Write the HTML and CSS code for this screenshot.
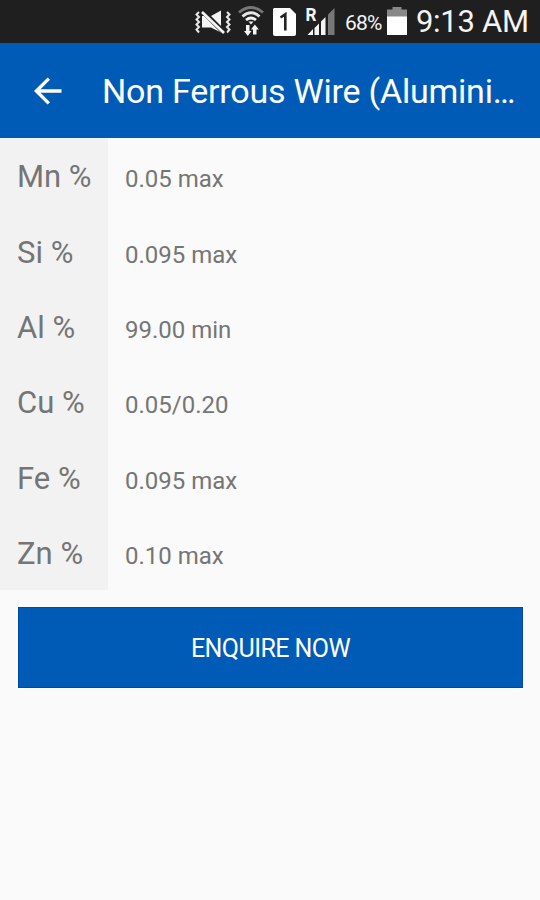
FILE: index.html
```
<!DOCTYPE html>
<html lang="en">
<head>
    <meta charset="UTF-8">
    <title>Non Ferrous Wire (Aluminium)</title>
    <link rel="stylesheet" href="styles.css">
</head>
<body>
    <!-- Status bar -->
    <div class="status-bar">
        <svg class="icon-mute" width="36" height="26" viewBox="0 0 36 26">
            <path d="M4 3 L1.5 5.5 L4 8 L1.5 10.5 L4 13 L1.5 15.5 L4 18 L1.5 20.5 L4 23.5" fill="none" stroke="#e8e8e8" stroke-width="2"/>
            <path d="M32 3 L34.5 5.5 L32 8 L34.5 10.5 L32 13 L34.5 15.5 L32 18 L34.5 20.5 L32 23.5" fill="none" stroke="#e8e8e8" stroke-width="2"/>
            <path d="M7 7 H16 L26 1.5 V23.5 L16 18.5 H7 Z" fill="#f4f4f4"/>
            <path d="M8 2.5 L30 24.5" stroke="#1f1f1f" stroke-width="5"/>
            <path d="M7 3 L29 24" stroke="#f4f4f4" stroke-width="2.8"/>
        </svg>
        <svg class="icon-wifi" width="26" height="31" viewBox="0 0 26 31">
            <path d="M1 6.5 Q13 -3.5 25 6.5" fill="none" stroke="#777" stroke-width="2.8"/>
            <path d="M4.5 10.5 Q13 3 21.5 10.5" fill="none" stroke="#e4e4e4" stroke-width="3"/>
            <path d="M8 14 Q13 10 18 14" fill="none" stroke="#f4f4f4" stroke-width="2.8"/>
            <path d="M10.5 15.5 H15.5 L13 18.5 Z" fill="#f4f4f4"/>
            <path d="M8 19 H11.5 V25 H13.5 L9.8 30 L6 25 H8 Z" fill="#f4f4f4"/>
            <path d="M15 28.5 H18.5 V23.5 H20.8 L16.8 18.5 L13 23.5 H15 Z" fill="#f4f4f4"/>
        </svg>
        <svg class="icon-sim" width="23" height="28" viewBox="0 0 23 28">
            <path d="M1 0 H17 L23 6 V26 Q23 28 21 28 H2 Q0 28 0 26 V1 Z" fill="#fff"/>
            <path d="M7.5 9.5 L12.3 6.3 V22.5" fill="none" stroke="#222" stroke-width="2.6"/>
        </svg>
        <svg class="icon-signal" width="32" height="36" viewBox="-2 -6 32 36">
            <text class="roaming" x="-0.5" y="14.5" textLength="11" lengthAdjust="spacingAndGlyphs">R</text>
            <path d="M1.5 29 L7 23 V29 Z M8.5 29 V22 L13 17.5 V29 Z M15 29 V15.5 L19.5 11 V29 Z" fill="#f4f4f4"/>
            <path d="M22 29 V8.5 L28.5 2 V29 Z" fill="#777"/>
        </svg>
        <span class="battery-level">68%</span>
        <svg class="icon-battery" width="20" height="28" viewBox="0 0 20 28">
            <path d="M0 2.5 H5.5 V0 H14.5 V2.5 H20 V10 H0 Z" fill="#888"/>
            <rect y="9.5" width="20" height="18.5" fill="#fff"/>
        </svg>
        <span class="clock">9:13 AM</span>
    </div>

    <!-- Toolbar -->
    <header class="toolbar">
        <svg class="back" width="28" height="28" viewBox="0 0 28 28">
            <path d="M27.5 14 H2.5 M14.8 1.6 L2.4 14 L14.8 26.4" fill="none" stroke="#fff" stroke-width="3.4"/>
        </svg>
        <h1 class="title">Non Ferrous Wire (Alumini…</h1>
    </header>

    <!-- Chemical composition -->
    <dl class="specs">
        <dt>Mn %</dt>
        <dd>0.05 max</dd>
        <dt>Si %</dt>
        <dd>0.095 max</dd>
        <dt>Al %</dt>
        <dd>99.00 min</dd>
        <dt>Cu %</dt>
        <dd>0.05/0.20</dd>
        <dt>Fe %</dt>
        <dd>0.095 max</dd>
        <dt>Zn %</dt>
        <dd>0.10 max</dd>
    </dl>

    <button class="enquire">ENQUIRE NOW</button>
</body>
</html>
```

FILE: styles.css
```
body {
    margin: 0;
    min-height: 900px;
    background: #fafafa;
    font-family: Roboto, "Liberation Sans", sans-serif;
}

.status-bar {
    display: flex;
    align-items: flex-start;
    box-sizing: border-box;
    height: 43px;
    padding-left: 195px;
    background: #1f1f1f;
    color: #f4f4f4;
    white-space: nowrap;
}

.status-bar svg {
    flex: none;
}

.icon-mute {
    margin-top: 9px;
}

.icon-wifi {
    margin: 6px 0 0 7px;
}

.icon-sim {
    margin: 8px 0 0 9px;
}

.icon-signal {
    margin-left: 8px;
}

.roaming {
    font-size: 19px;
    font-weight: bold;
    fill: #f4f4f4;
}

.battery-level {
    width: 42px;
    margin: 10px 0 0 9px;
    font-size: 21px;
    line-height: 26px;
    letter-spacing: -0.8px;
}

.icon-battery {
    margin-top: 7px;
}

.clock {
    margin: 4px 0 0 9px;
    font-size: 31px;
    line-height: 36px;
    letter-spacing: -0.3px;
}

.toolbar {
    display: flex;
    align-items: center;
    box-sizing: border-box;
    height: 95px;
    padding: 0 0 0 34px;
    background: #005bb7;
    color: #fff;
}

.back {
    flex: none;
}

.title {
    margin: 0 0 0 40px;
    font-size: 34px;
    font-weight: normal;
    line-height: 40px;
    letter-spacing: -0.22px;
    white-space: nowrap;
}

.specs {
    display: grid;
    grid-template-columns: 108px 1fr;
    grid-auto-rows: 75.33px;
    margin: 0;
    color: #757575;
}

.specs dt {
    padding: 21.4px 0 0 17px;
    background: #f2f2f2;
    font-size: 31px;
    line-height: 36px;
}

.specs dd {
    margin: 0;
    padding: 27.4px 0 0 17px;
    font-size: 24px;
    line-height: 28px;
}

.enquire {
    display: block;
    width: 505px;
    height: 81px;
    margin: 17px 0 0 18px;
    padding: 2px 0 0;
    border: 1px solid #004aa5;
    background: #005bb7;
    color: #fff;
    font-family: inherit;
    font-size: 25px;
    letter-spacing: -0.55px;
    cursor: pointer;
}
```
